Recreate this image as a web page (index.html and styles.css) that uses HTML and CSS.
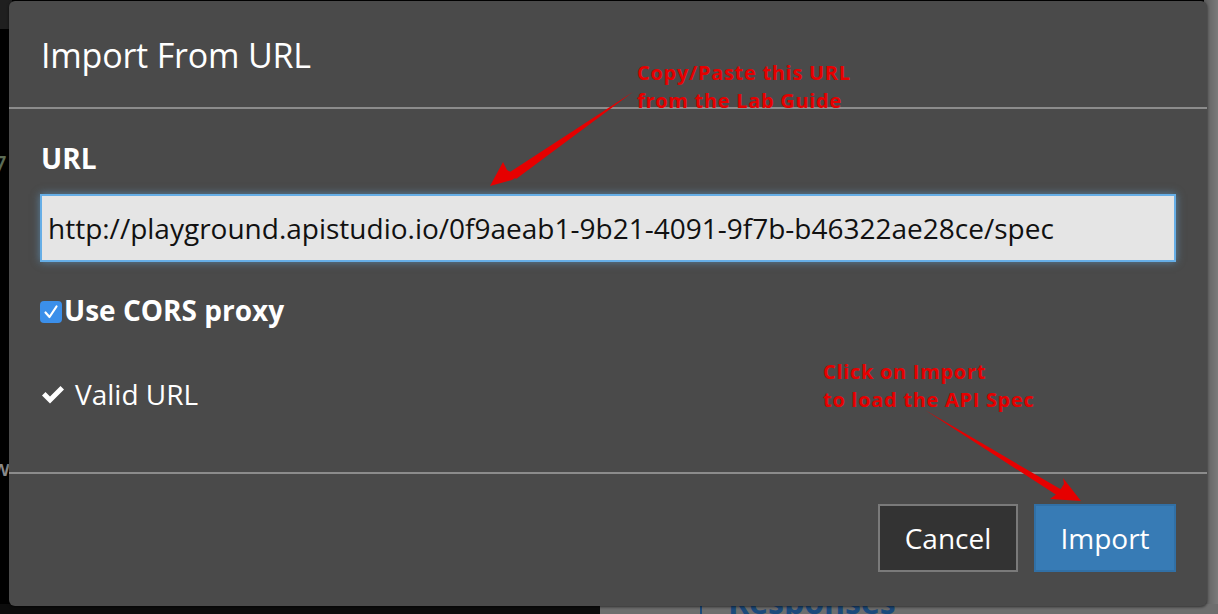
FILE: index.html
```html
<!DOCTYPE html>
<html>
<head>
<meta charset="utf-8">
<link rel="stylesheet" href="styles.css">
</head>
<body>
<div class="backdrop">
  <div class="bg-topstrip"></div>
  <div class="bg-left7">7</div>
  <div class="bg-leftw">w</div>
  <div class="bg-right"></div>
  <div class="bg-bottom">
    <div class="bg-bottom-dark"></div>
    <div class="bg-bottom-line"></div>
    <div class="bg-bottom-text">Responses</div>
  </div>
</div>
<div class="modal">
  <div class="modal-header">
    <h1 class="modal-title">Import From URL</h1>
  </div>
  <div class="modal-body">
    <label class="field-label">URL</label>
    <div class="url-input">http://playground.apistudio.io/0f9aeab1-9b21-4091-9f7b-b46322ae28ce/spec</div>
    <div class="check-row">
      <span class="checkbox"><svg width="22" height="22" viewBox="0 0 22 22"><path d="M5.5 11.5 L9.5 16 L16.5 5.5" fill="none" stroke="#fff" stroke-width="2.2" stroke-linecap="round" stroke-linejoin="round"/></svg></span>
      <span class="check-label">Use CORS proxy</span>
    </div>
    <div class="valid-row">
      <svg class="valid-icon" width="24" height="22" viewBox="0 0 24 22"><path d="M1 11.5 L4.5 8 L9 12.5 L19.5 2 L23 5.5 L9 19.5 Z" fill="#fff"/></svg>
      <span>Valid URL</span>
    </div>
  </div>
  <div class="modal-footer">
    <button class="btn btn-cancel">Cancel</button>
    <button class="btn btn-import">Import</button>
  </div>
</div>
<div class="note note-1">Copy/Paste this URL<br>from the Lab Guide</div>
<div class="note note-2">Click on Import<br>to load the API Spec</div>
<svg class="arrows" width="1218" height="614" viewBox="0 0 1218 614">
  <path d="M633 92 L510 172 L516 179 Z" fill="#e60000"/>
  <path d="M490 186 L503 162 L507 170 L518 176 L512 180 Z" fill="#e60000"/>
  <path d="M925 410 L1062 490 L1058 496 Z" fill="#e60000"/>
  <path d="M1081 501 L1050 499 L1058 493 L1064 484 L1063 478 Z" fill="#e60000"/>
</svg>
</body>
</html>
```
FILE: styles.css
```css
html, body {
  margin: 0;
  padding: 0;
}
body {
  width: 1218px;
  height: 614px;
  background: #000;
  overflow: hidden;
  position: relative;
  font-family: "Open Sans", "Noto Sans", sans-serif;
}
.backdrop {
  position: absolute;
  inset: 0;
}
.bg-topstrip {
  position: absolute;
  left: 0;
  top: 0;
  width: 12px;
  height: 29px;
  background: #1f1f1f;
}
.bg-left7 {
  position: absolute;
  left: -6px;
  top: 148px;
  color: #5b6b55;
  font-size: 22px;
  font-weight: 600;
}
.bg-leftw {
  position: absolute;
  left: -8px;
  top: 452px;
  color: #8a8a8a;
  font-size: 22px;
  font-weight: 600;
}
.bg-right {
  position: absolute;
  right: 0;
  top: 0;
  width: 14px;
  height: 614px;
  background: linear-gradient(90deg, #5e5e5e, #7a7a7a);
}
.bg-bottom {
  position: absolute;
  left: 0;
  bottom: 0;
  width: 1218px;
  height: 10px;
  background: #6e6e6e;
  overflow: hidden;
}
.bg-bottom-dark {
  position: absolute;
  left: 0;
  top: 0;
  width: 600px;
  height: 10px;
  background: #0c0c0c;
}
.bg-bottom-line {
  position: absolute;
  left: 700px;
  top: 0;
  width: 2px;
  height: 10px;
  background: #1c4a7c;
}
.bg-bottom-text {
  position: absolute;
  left: 728px;
  top: -24px;
  font-size: 32px;
  font-weight: 700;
  color: #1c4a7c;
}
.modal {
  position: absolute;
  left: 9px;
  top: 1px;
  width: 1198px;
  height: 605px;
  background: #4a4a4a;
  border-radius: 6px;
  box-shadow: 0 1px 3px rgba(0,0,0,0.6);
  display: flex;
  flex-direction: column;
  color: #fff;
}
.modal-header {
  border-bottom: 2px solid #8c8c8c;
  padding: 0 32px;
  display: flex;
  align-items: center;
  box-sizing: border-box;
  flex: none;
  height: 108px;
}
.modal-title {
  margin: 0;
  font-size: 34px;
  font-weight: 400;
  letter-spacing: -0.2px;
  padding-top: 2px;
}
.modal-body {
  flex: none;
  height: 365px;
  box-sizing: border-box;
  padding: 30px 31px 0 31px;
  border-bottom: 2px solid #8c8c8c;
  display: flex;
  flex-direction: column;
}
.field-label {
  font-size: 28px;
  font-weight: 700;
  padding-left: 1px;
  line-height: 38px;
}
.url-input {
  margin-top: 17px;
  height: 68px;
  box-sizing: border-box;
  background: #e5e5e5;
  border: 2px solid #66aee6;
  box-shadow: 0 0 8px rgba(102,174,230,0.55);
  color: #111;
  font-size: 28px;
  padding: 0 6px;
  display: flex;
  align-items: center;
  white-space: nowrap;
}
.check-row {
  margin-top: 32px;
  display: flex;
  align-items: center;
  height: 32px;
}
.checkbox {
  width: 22px;
  height: 22px;
  border-radius: 4px;
  background: #3b8fea;
  display: flex;
  margin-right: 2px;
  margin-top: 3px;
}
.check-label {
  font-size: 28px;
  font-weight: 700;
  letter-spacing: 0;
}
.valid-row {
  margin-top: 49px;
  display: flex;
  align-items: center;
  gap: 10px;
  font-size: 28px;
  padding-left: 1px;
}
.valid-icon {
  margin-top: 2px;
}
.modal-footer {
  flex: 1;
  display: flex;
  justify-content: flex-end;
  align-items: flex-start;
  gap: 16px;
  padding: 30px 31px 0 0;
}
.btn {
  height: 68px;
  font-family: "Open Sans", "Noto Sans", sans-serif;
  font-size: 28px;
  color: #fff;
  padding: 0;
  cursor: pointer;
}
.btn-cancel {
  width: 140px;
  background: #333;
  border: 2px solid #7a7a7a;
}
.btn-import {
  width: 142px;
  background: #377bb5;
  border: 2px solid #3170a6;
}
.note {
  position: absolute;
  color: #e60000;
  font-family: "Open Sans", "Noto Sans", sans-serif;
  font-weight: 700;
  font-size: 20px;
  line-height: 28px;
  letter-spacing: 0.7px;
}
.note-1 {
  left: 637px;
  top: 59px;
}
.note-2 {
  left: 823px;
  top: 358px;
}
.arrows {
  position: absolute;
  left: 0;
  top: 0;
  pointer-events: none;
}
```
